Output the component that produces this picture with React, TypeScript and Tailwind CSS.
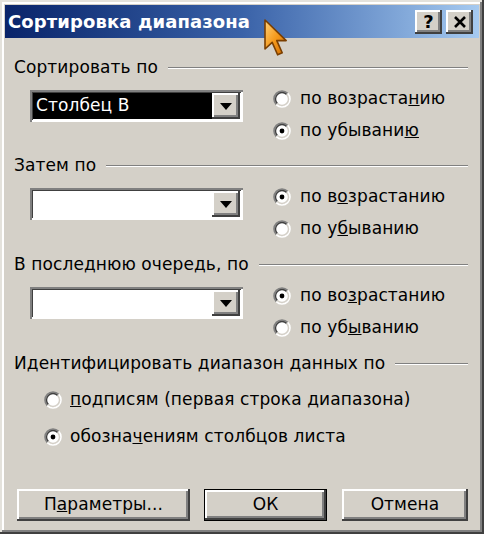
import React from "react";

const raised =
  "shadow-[inset_-2px_-2px_0_#404040,inset_2px_2px_0_#ffffff,inset_-4px_-4px_0_#808080]";

function Radio({ checked }: { checked?: boolean }) {
  return (
    <svg width="18" height="18" viewBox="0 0 18 18" className="shrink-0">
      <circle cx="9" cy="9" r="7" fill="#ffffff" />
      <path d="M3.34 14.66 A8 8 0 0 1 14.66 3.34" fill="none" stroke="#808080" strokeWidth="1.6" />
      <path d="M14.66 3.34 A8 8 0 0 1 3.34 14.66" fill="none" stroke="#ffffff" strokeWidth="1.6" />
      <path d="M4.4 13.6 A6.5 6.5 0 0 1 13.6 4.4" fill="none" stroke="#404040" strokeWidth="1.4" />
      <path d="M13.6 4.4 A6.5 6.5 0 0 1 4.4 13.6" fill="none" stroke="#d4d0c8" strokeWidth="1.4" />
      {checked && <circle cx="9" cy="9" r="2.4" fill="#000000" />}
    </svg>
  );
}

function Header({ children }: { children: React.ReactNode }) {
  return (
    <div className="flex items-center h-[22px]">
      <span className="whitespace-nowrap">{children}</span>
      <div className="flex-1 ml-[10px] h-[2px] border-t border-[#808080] border-b border-b-white" />
    </div>
  );
}

function Combo({ value }: { value?: string }) {
  return (
    <div className="w-[213px] h-[32px] bg-white p-[3px] flex shadow-[inset_2px_2px_0_#808080,inset_-2px_-2px_0_#ffffff,inset_3px_3px_0_#404040]">
      <div className={"flex-1 flex items-center pl-[3px] " + (value ? "bg-black text-white" : "")}>
        {value}
      </div>
      <div className={"w-[28px] h-[26px] bg-[#d4d0c8] flex items-center justify-center " + raised}>
        <svg width="12" height="7" viewBox="0 0 12 7">
          <path d="M0 0 H12 L6 7 Z" fill="#000" />
        </svg>
      </div>
    </div>
  );
}

function SortGroup({
  title,
  value,
  desc,
  asc,
  descLabel,
}: {
  title: string;
  value?: string;
  desc?: boolean;
  asc: React.ReactNode;
  descLabel: React.ReactNode;
}) {
  return (
    <div>
      <Header>{title}</Header>
      <div className="flex h-[76px] pt-[4px] pl-[16px]">
        <div className="mt-[7px]">
          <Combo value={value} />
        </div>
        <div className="ml-[30px] flex flex-col">
          <label className="flex items-center h-[32px] gap-[9px]">
            <Radio checked={!desc} />
            <span>{asc}</span>
          </label>
          <label className="flex items-center h-[32px] gap-[9px]">
            <Radio checked={desc} />
            <span>{descLabel}</span>
          </label>
        </div>
      </div>
    </div>
  );
}

function Cursor() {
  return (
    <svg
      width="28"
      height="40"
      viewBox="0 0 14 20"
      className="absolute left-[263px] top-[18px]"
    >
      <defs>
        <linearGradient id="cur" x1="0" y1="0" x2="1" y2="1">
          <stop offset="0" stopColor="#ffd27a" />
          <stop offset="0.5" stopColor="#f59a1c" />
          <stop offset="1" stopColor="#d06a00" />
        </linearGradient>
      </defs>
      <path
        d="M1 1 L1 15.5 L4.6 12.2 L7.3 18.4 L9.6 17.4 L6.9 11.3 L11.6 11.3 Z"
        fill="url(#cur)"
        stroke="#7a3e00"
        strokeWidth="0.8"
        strokeLinejoin="round"
      />
    </svg>
  );
}

export default function App() {
  return (
    <div className="relative w-[484px] h-[534px] bg-[#d4d0c8] p-[5px] text-[17px] tracking-[0.1px] text-black font-['DejaVu_Sans',sans-serif] shadow-[inset_-2px_-2px_0_#404040,inset_2px_2px_0_#e4e2dc,inset_-4px_-4px_0_#808080,inset_4px_4px_0_#ffffff]">
      {/* Title bar */}
      <div className="h-[33px] flex items-center bg-gradient-to-r from-[#0a246a] via-[#3a62a8] to-[#a6caf0] pl-[3px] pr-[6px]">
        <span className="text-white font-bold text-[18px] tracking-[0.1px]">Сортировка диапазона</span>
        <div className="ml-auto flex gap-[4px]">
          <div className={"w-[27px] h-[24px] bg-[#d4d0c8] flex items-center justify-center font-bold text-[18px] " + raised}>
            ?
          </div>
          <div className={"w-[27px] h-[24px] bg-[#d4d0c8] flex items-center justify-center " + raised}>
            <svg width="14" height="12" viewBox="0 0 14 12">
              <path d="M2 1 L12 11 M12 1 L2 11" stroke="#000" strokeWidth="2.6" />
            </svg>
          </div>
        </div>
      </div>

      {/* Body */}
      <div className="pl-[9px] pr-[11px] pt-[19px]">
        <SortGroup
          title="Сортировать по"
          value="Столбец В"
          desc
          asc={<>по возраста<u>н</u>ию</>}
          descLabel={<>по убывани<u>ю</u></>}
        />
        <SortGroup
          title="Затем по"
          asc={<>по в<u>о</u>зрастанию</>}
          descLabel={<>по у<u>б</u>ыванию</>}
        />
        <div className="mt-[1px]">
          <SortGroup
            title="В последнюю очередь, по"
            asc={<>по во<u>з</u>растанию</>}
            descLabel={<>по уб<u>ы</u>ванию</>}
          />
        </div>

        <div className="mt-[1px]">
          <Header>Идентифицировать диапазон данных по</Header>
          <div className="pl-[30px] pt-[6px]">
            <label className="flex items-center h-[37px] gap-[8px]">
              <Radio />
              <span><u>п</u>одписям (первая строка диапазона)</span>
            </label>
            <label className="flex items-center h-[37px] gap-[8px]">
              <Radio checked />
              <span>обозна<u>ч</u>ениям столбцов листа</span>
            </label>
          </div>
        </div>

        <div className="flex mt-[34px] pl-[3px] gap-[14px]">
          <button className={"w-[173px] h-[32px] bg-[#d4d0c8] " + raised}>
            П<u>а</u>раметры...
          </button>
          <div className="w-[123px] h-[32px] border border-black">
            <button className={"w-full h-full bg-[#d4d0c8] " + raised}>ОК</button>
          </div>
          <button className={"ml-[1px] w-[126px] h-[32px] bg-[#d4d0c8] " + raised}>Отмена</button>
        </div>
      </div>

      <Cursor />
    </div>
  );
}
